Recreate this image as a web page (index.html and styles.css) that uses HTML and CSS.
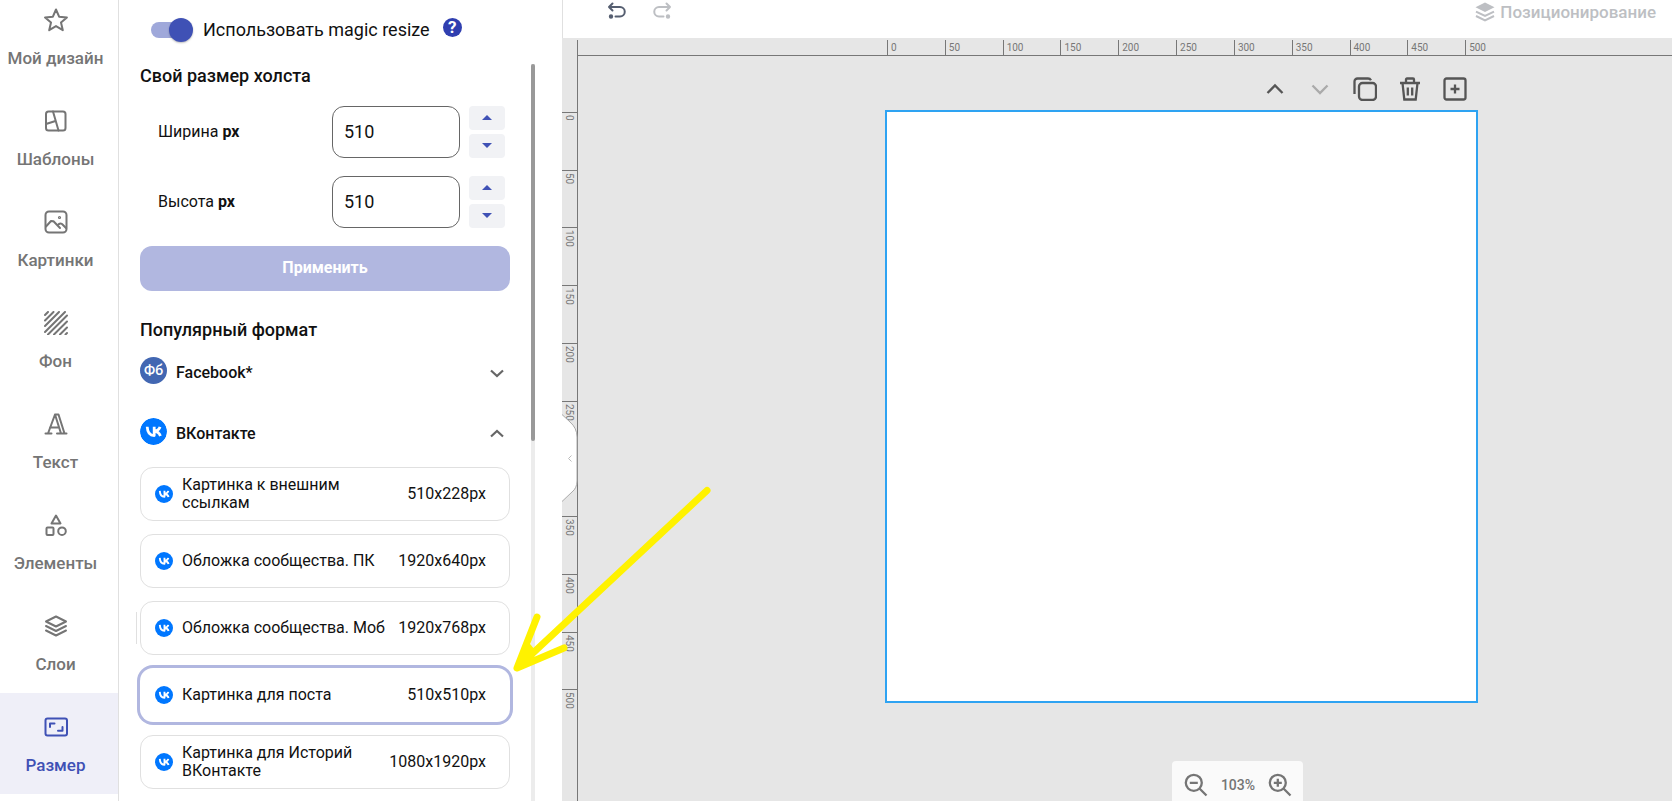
FILE: index.html
```html
<!DOCTYPE html>
<html lang="ru">
<head>
<meta charset="utf-8">
<title>Редактор — Размер</title>
<link rel="stylesheet" href="styles.css">
</head>
<body>
<svg class="defs" aria-hidden="true">
  <symbol id="vk" viewBox="0 0 27 27">
    <circle cx="13.500" cy="13.500" r="13.500" fill="#0077ff"/>
    <path fill="none" stroke="#fff" stroke-width="2.800" stroke-linejoin="round" d="M7.200 8.800c.3 6 2.600 8.800 7 8.800V8.800M20 8.800c-.6 2.400-2.400 4-5.800 4.300 3.200.3 5.200 2 6.200 4.900"/>
  </symbol>
  <symbol id="chev-down" viewBox="0 0 16 16"><path d="M2 5.500 8 11l6-5.500" fill="none" stroke="currentColor" stroke-width="2.200"/></symbol>
  <symbol id="chev-up" viewBox="0 0 16 16"><path d="M2 10.500 8 5l6 5.500" fill="none" stroke="currentColor" stroke-width="2.200"/></symbol>
</svg>
<div class="app">
  <nav class="sidebar">
    <a class="nav-item" href="#design"><svg class="nav-icon" viewBox="0 0 24 24"><path d="m12 1.500 3.100 7.200 7.800.7-5.900 5.100 1.800 7.700L12 18.100l-6.800 4.100L7 14.500 1.100 9.400l7.800-.7z"/></svg><span>Мой дизайн</span></a>
    <a class="nav-item" href="#templates"><svg class="nav-icon" viewBox="0 0 24 24"><rect x="2" y="2.500" width="19.500" height="19" rx="2.500"/><path d="M9 2.500 14.500 21.500M2 15l9.500-3"/></svg><span>Шаблоны</span></a>
    <a class="nav-item" href="#images"><svg class="nav-icon" viewBox="0 0 24 24"><rect x="1.500" y="1.500" width="21" height="21" rx="3.500"/><path d="M2 16.500 7 11l2.500.2L16 18M13.500 15.500c1.500-2 3-2.500 4.500-1.500l4 4"/><circle cx="15.500" cy="7.500" r=".6"/></svg><span>Картинки</span></a>
    <a class="nav-item" href="#background"><svg class="nav-icon" viewBox="0 0 24 24"><path d="M1 4l3-3M1 9.500 9.500 1M1 15 15 1M1 21 21 1M4 23.500 23 4.500M10 23.500l13-13M16 23.500l7-7M21.500 23.500l1.500-1.500"/></svg><span>Фон</span></a>
    <a class="nav-item" href="#text"><svg class="nav-icon" viewBox="0 0 24 24"><path d="M1.500 21.500h6M4 21.500l7-19h3.500l6 19M11 2.500l6 19M6 15.500h8.500M13 21.500h9.500"/></svg><span>Текст</span></a>
    <a class="nav-item" href="#elements"><svg class="nav-icon" viewBox="0 0 24 24"><path d="m12 2.500 4.500 8h-9z"/><rect x="2.500" y="14.500" width="7" height="7.500" rx="1"/><circle cx="18" cy="18.200" r="3.800"/></svg><span>Элементы</span></a>
    <a class="nav-item" href="#layers"><svg class="nav-icon" viewBox="0 0 24 24"><path d="m12 2.500 10 5-10 5-10-5zM2 12l10 5 10-5M2 16.500l10 5 10-5"/></svg><span>Слои</span></a>
    <a class="nav-item active" href="#size" aria-current="page"><svg class="nav-icon" viewBox="0 0 24 24"><rect x="1.500" y="3.500" width="21.500" height="17" rx="2"/><path d="M6 12V8.500h4.500M18.500 12v3.800H14"/></svg><span>Размер</span></a>
  </nav>

  <aside class="panel">
    <div class="magic">
      <input class="switch" type="checkbox" id="magic" checked>
      <label for="magic">Использовать magic resize</label>
      <button class="help" type="button" aria-label="Помощь">?</button>
    </div>
    <div class="scroll">
      <div class="content">
        <h2>Свой размер холста</h2>
        <form class="size-form">
          <div class="field">
            <label for="w">Ширина <b>px</b></label>
            <input class="number" id="w" type="text" value="510">
            <div class="spin">
              <button type="button" aria-label="Увеличить ширину"><svg viewBox="0 0 10 5"><path d="M0 5 5 0l5 5z"/></svg></button>
              <button type="button" aria-label="Уменьшить ширину"><svg viewBox="0 0 10 5"><path d="m0 0 5 5 5-5z"/></svg></button>
            </div>
          </div>
          <div class="field">
            <label for="h">Высота <b>px</b></label>
            <input class="number" id="h" type="text" value="510">
            <div class="spin">
              <button type="button" aria-label="Увеличить высоту"><svg viewBox="0 0 10 5"><path d="M0 5 5 0l5 5z"/></svg></button>
              <button type="button" aria-label="Уменьшить высоту"><svg viewBox="0 0 10 5"><path d="m0 0 5 5 5-5z"/></svg></button>
            </div>
          </div>
          <button class="apply" type="button">Применить</button>
        </form>
        <h2>Популярный формат</h2>
        <div class="groups">
          <button class="group" type="button" aria-expanded="false"><span class="avatar fb">Фб</span><span class="group-name">Facebook*</span><svg class="chev"><use href="#chev-down"/></svg></button>
          <button class="group" type="button" aria-expanded="true"><svg class="avatar"><use href="#vk"/></svg><span class="group-name">ВКонтакте</span><svg class="chev"><use href="#chev-up"/></svg></button>
        </div>
        <div class="formats">
          <button class="format" type="button"><svg class="mini"><use href="#vk"/></svg><span class="name">Картинка к внешним ссылкам</span><span>510x228px</span></button>
          <button class="format" type="button"><svg class="mini"><use href="#vk"/></svg><span class="name">Обложка сообщества. ПК</span><span>1920x640px</span></button>
          <button class="format marked" type="button"><svg class="mini"><use href="#vk"/></svg><span class="name">Обложка сообщества. Моб</span><span>1920x768px</span></button>
          <button class="format selected" type="button"><svg class="mini"><use href="#vk"/></svg><span class="name">Картинка для поста</span><span>510x510px</span></button>
          <button class="format" type="button"><svg class="mini"><use href="#vk"/></svg><span class="name">Картинка для Историй ВКонтакте</span><span>1080x1920px</span></button>
        </div>
      </div>
      <div class="track"><div class="thumb"></div></div>
    </div>
  </aside>

  <main class="editor">
    <header class="topbar">
      <button class="tool undo" type="button" aria-label="Отменить"><svg viewBox="0 0 20 18"><path d="M5.500 1.500 2 5l3.500 3.500M2 5h11a4.500 4.500 0 0 1 0 9.500H8.500"/><circle cx="4" cy="14.500" r="1.200"/></svg></button>
      <button class="tool redo" type="button" aria-label="Повторить" disabled><svg viewBox="0 0 20 18"><path d="M14.500 1.500 18 5l-3.500 3.500M18 5H7a4.500 4.500 0 0 0 0 9.500h4.500"/><circle cx="16" cy="14.500" r="1.200"/></svg></button>
      <button class="position" type="button" disabled><svg viewBox="0 0 20 20"><path class="fill" d="m10 .5 9.500 4.800L10 10 .5 5.300z"/><path d="M1 9.600 10 14l9-4.400M1 14l9 4.500 9-4.500"/></svg>Позиционирование</button>
    </header>
    <div class="ruler-top"><div class="scale"><span>0</span><span>50</span><span>100</span><span>150</span><span>200</span><span>250</span><span>300</span><span>350</span><span>400</span><span>450</span><span>500</span></div></div>
    <div class="work">
      <div class="ruler-left"><div class="scale"><span>0</span><span>50</span><span>100</span><span>150</span><span>200</span><span>250</span><span>300</span><span>350</span><span>400</span><span>450</span><span>500</span></div></div>
      <div class="stage">
        <div class="page">
          <div class="page-tools">
            <button type="button" aria-label="Выше"><svg viewBox="0 0 24 24"><path d="m4.500 16 7.500-7.500 7.500 7.500"/></svg></button>
            <button type="button" aria-label="Ниже" disabled><svg viewBox="0 0 24 24"><path d="m4.500 8.500 7.500 7.500 7.500-7.500"/></svg></button>
            <button type="button" aria-label="Копировать"><svg viewBox="0 0 24 24"><rect x="6" y="6" width="17" height="17" rx="3.500"/><path d="M1.500 17V4.500a3 3 0 0 1 3-3H15q2 0 3 1.800"/></svg></button>
            <button type="button" aria-label="Удалить"><svg viewBox="0 0 24 24"><path d="M2 6h20M4.500 6l1.800 16.500h11.400L19.500 6M8 6V2.500q0-1 1-1h6q1 0 1 1V6M9.800 10.500v8M14.200 10.500v8"/></svg></button>
            <button type="button" aria-label="Добавить"><svg viewBox="0 0 24 24"><rect x="1.500" y="1.500" width="21" height="21" rx="2"/><path d="M7.500 12h9M12 7.500v9"/></svg></button>
          </div>
          <div class="artboard"></div>
        </div>
      </div>
      <button class="handle" type="button" aria-label="Свернуть панель"><svg viewBox="0 0 16 88"><path class="shape" d="M0 .5 8 8q7 6 7 15v44q0 7-5 11L0 87.500"/><path class="arrow" d="m9.500 41.500-3 3 3 3"/></svg></button>
    </div>
    <div class="zoom">
      <button type="button" aria-label="Уменьшить"><svg viewBox="0 0 24 24"><circle cx="9.800" cy="9.800" r="8"/><path d="m15.500 15.500 7 7M5.800 9.800h8"/></svg></button>
      <span>103%</span>
      <button type="button" aria-label="Увеличить"><svg viewBox="0 0 24 24"><circle cx="9.800" cy="9.800" r="8"/><path d="m15.500 15.500 7 7M5.800 9.800h8M9.800 5.800v8"/></svg></button>
    </div>
  </main>
  <svg class="pointer" viewBox="0 0 200 187" aria-hidden="true"><path d="M194 4.500 5 181M24 131 4 182l47-20"/><path class="tip" d="M4 182 16 158l7 9z"/></svg>
</div>
</body>
</html>
```

FILE: styles.css
```css
* { box-sizing: border-box; }
body { margin: 0; font-family: Roboto, "Liberation Sans", sans-serif; color: #111; background: #fff; overflow: hidden; }
button { border: 0; padding: 0; background: none; font: inherit; color: inherit; display: flex; align-items: center; justify-content: center; }
svg { display: block; }
.defs { display: none; }
.app { position: relative; display: grid; grid-template-columns: 119px 443px minmax(0, 1fr); height: 100vh; }

.sidebar { display: flex; flex-direction: column; justify-content: flex-end; padding-bottom: 7px; border-right: 1px solid #e0e0e0; overflow: hidden; min-height: 0; }
.nav-item { flex: none; display: flex; flex-direction: column; align-items: center; gap: 16px; height: 101px; padding: 22px 7px 0 0; color: #757575; font-size: 17px; line-height: 20px; font-weight: 500; text-decoration: none; white-space: nowrap; }
.nav-item.active { color: #3f51b5; background: #efeff8; }
.nav-icon { width: 24px; height: 24px; fill: none; stroke: currentColor; stroke-width: 2; stroke-linejoin: round; stroke-linecap: round; }

.panel { display: flex; flex-direction: column; min-height: 0; }
.magic { flex: none; display: flex; align-items: center; height: 64px; padding: 0 0 4px 32px; font-size: 18px; }
.magic label { margin: 0 13px 2px 10px; }
.switch { appearance: none; position: relative; width: 42px; height: 24px; margin: 0; }
.switch::before { content: ""; position: absolute; inset: 4px 2px 4px 0; border-radius: 8px; background: #9fa8da; }
.switch::after { content: ""; position: absolute; right: 0; top: 0; width: 24px; height: 24px; border-radius: 50%; background: #3f51b5; box-shadow: 0 1px 2px #0004; }
.help { width: 19px; height: 19px; margin-bottom: 6px; border-radius: 50%; background: #303fb0; color: #fff; font-size: 17px; line-height: 19px; font-weight: 700; }
.scroll { flex: 1; min-height: 0; display: flex; padding-right: 27px; }
.content { flex: 1; padding: 0 21px; overflow: hidden; }
.track { width: 4px; background: #ececec; }
.thumb { height: 377px; background: #999; border-radius: 2px; }

h2 { margin: 0; font-size: 18px; line-height: 24px; font-weight: 500; }
.size-form { display: flex; flex-direction: column; gap: 18px; padding: 18px 0 27px; }
.field { display: flex; align-items: center; gap: 9px; padding: 0 5px 0 18px; font-size: 16px; }
.field label { flex: 1; padding-bottom: 2px; }
.number { width: 128px; height: 52px; border: 1px solid #666; border-radius: 12px; padding: 0 11px 2px; font: 18px Roboto, sans-serif; color: #111; background: #fff; }
.spin { display: flex; flex-direction: column; gap: 4px; }
.spin button { width: 36px; height: 24px; padding-bottom: 1px; border-radius: 4px; background: #f1f2f5; }
.spin svg { width: 10px; height: 5px; fill: #3f51b5; }
.apply { height: 45px; padding-bottom: 2px; border-radius: 12px; background: #b1b7e0; color: #fff; font-size: 16px; font-weight: 700; }

.groups { display: flex; flex-direction: column; padding-top: 11px; }
.group { width: 100%; height: 61px; align-items: flex-start; padding: 4px 5px 0 0; font-size: 16px; line-height: 19px; font-weight: 500; }
.group-name { flex: 1; margin-left: 9px; padding-top: 6px; text-align: left; }
.avatar { width: 27px; height: 27px; border-radius: 50%; }
.fb { background: #4267b2; color: #fff; font-size: 14px; line-height: 27px; text-align: center; }
.chev { width: 16px; height: 16px; margin-top: 8px; color: #666; }
.formats { display: flex; flex-direction: column; gap: 13px; margin: -8px -4px 0; padding: 0 4px; }
.format { position: relative; height: 54px; flex: none; gap: 9px; padding: 0 23px 0 14px; border: 1px solid #e0e0e0; border-radius: 13px; font-size: 16px; line-height: 18px; background: #fff; white-space: nowrap; }
.format .name { flex: 1; text-align: left; white-space: normal; }
.mini { width: 18px; height: 18px; flex: none; }
.selected { border-color: transparent; box-shadow: 0 0 0 3px #b1b7e0; }
.marked::before { content: ""; position: absolute; left: -5px; top: 10px; bottom: 10px; width: 1px; background: #e0e0e0; }

.editor { position: relative; display: flex; flex-direction: column; min-width: 0; min-height: 0; background: #e6e6e6; }
.topbar { flex: none; display: flex; gap: 25px; height: 38px; padding: 2px 16px 0 44px; border-left: 1px solid #e0e0e0; background: #fff; align-items: flex-start; }
.tool svg { width: 20px; height: 18px; fill: none; stroke: currentColor; stroke-width: 2; stroke-linecap: round; stroke-linejoin: round; }
.undo { color: #555e70; }
.redo, .position { color: #bdbfc3; }
.tool circle { fill: currentColor; }
.position { gap: 5px; margin-left: auto; font-size: 17px; line-height: 18px; font-weight: 500; }
.position svg { width: 20px; height: 20px; fill: none; stroke: currentColor; stroke-width: 2; }
.position .fill { fill: currentColor; stroke: none; }
.ruler-top { flex: none; height: 18px; padding: 2px 0 0 310px; margin-left: 15px; border-bottom: 1px solid #777; }
.ruler-top .scale { display: flex; width: 636px; height: 15px; }
.scale span { flex: 1; color: #777; font-size: 10px; line-height: 15px; padding-left: 3px; border-left: 1px solid #777; }
.work { position: relative; flex: 1; min-height: 0; display: flex; }
.ruler-left { flex: none; width: 16px; height: calc(100% + 16px); margin-top: -16px; padding-top: 72px; border-right: 1px solid #777; overflow: hidden; }
.ruler-left .scale { display: flex; flex-direction: column; height: 635px; }
.ruler-left span { writing-mode: vertical-rl; padding: 2px 0 0; border-left: 0; border-top: 1px solid #777; }
.stage { flex: 1; min-width: 0; padding: 21px 0 0 307px; overflow: hidden; }
.page { width: 593px; }
.page-tools { display: flex; justify-content: flex-end; gap: 21px; padding: 0 11px 9px 0; color: #555; }
.page-tools svg { width: 24px; height: 24px; fill: none; stroke: currentColor; stroke-width: 2.3; }
.page-tools button:disabled { color: #aaa; }
.artboard { aspect-ratio: 1; border: 2px solid #2ea3f2; background: #fff; }
.handle { position: absolute; left: 0; top: 358px; }
.handle svg { width: 16px; height: 88px; fill: none; }
.handle .shape { fill: #fff; stroke: #aaa; }
.handle .arrow { stroke: #bbb; }
.zoom { position: absolute; left: 610px; bottom: 0; display: flex; align-items: center; justify-content: space-between; width: 131px; height: 40px; padding: 7px 11px 0 12px; border-radius: 4px 4px 0 0; background: #fafafa; color: #757575; font-size: 14px; font-weight: 500; }
.zoom svg { width: 24px; height: 24px; fill: none; stroke: currentColor; stroke-width: 2.3; }
.pointer { position: absolute; left: 513px; top: 486px; width: 200px; height: 187px; pointer-events: none; fill: none; stroke: #fff200; stroke-width: 7; stroke-linecap: round; stroke-linejoin: round; }
.pointer .tip { fill: #fff200; stroke-width: 2; }
```
